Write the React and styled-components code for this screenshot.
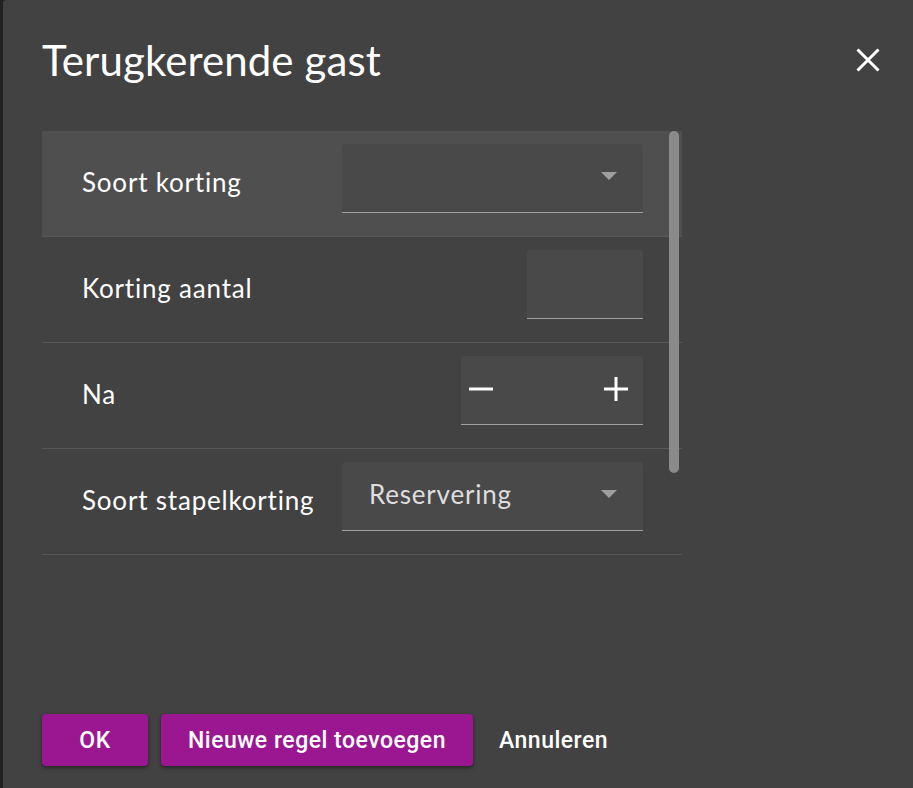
import React from "react";
import styled, { createGlobalStyle } from "styled-components";

const Global = createGlobalStyle`
  html, body { margin: 0; padding: 0; background: #212121; }
  body { font-family: Lato, "Noto Sans", sans-serif; overflow: hidden; }
  * { box-sizing: border-box; }
`;

const Page = styled.div`
  height: 788px;
  display: flex;
  padding-left: 3px;
`;

const Dialog = styled.section`
  flex: 1;
  background: #424242;
  border-top-left-radius: 4px;
  display: flex;
  flex-direction: column;
  padding-left: 39px;
  color: #fff;
`;

const Header = styled.header`
  display: flex;
  align-items: center;
  justify-content: space-between;
  padding-top: 36px;
  padding-right: 33px;
`;

const Title = styled.h1`
  margin: 0;
  font-family: Lato, sans-serif;
  font-weight: 400;
  font-size: 42px;
  line-height: 48px;
  letter-spacing: 0.1px;
  color: #fff;
`;

const CloseButton = styled.button`
  background: none;
  border: 0;
  padding: 0;
  width: 24px;
  height: 24px;
  display: flex;
  cursor: pointer;
`;

const Content = styled.div`
  position: relative;
  margin-top: 47px;
  width: 640px;
  flex: 1;
`;

const Row = styled.div`
  display: flex;
  align-items: center;
  height: 106px;
  padding: 0 39px 0 40px;
  border-bottom: 1px solid #575757;
  background: ${(p) => (p.$active ? "#4f4f4f" : "transparent")};
`;

const Label = styled.span`
  flex: 1;
  font-size: 26px;
  letter-spacing: 0.8px;
  color: #fff;
  margin-top: -4px;
`;

const Field = styled.div`
  width: ${(p) => p.$w}px;
  height: 69px;
  margin-bottom: 10px;
  background: #494949;
  border-top-left-radius: 4px;
  border-top-right-radius: 4px;
  border-bottom: 1px solid #a0a0a0;
  display: flex;
  align-items: center;
  justify-content: space-between;
  padding: 0 26px 0 27px;
`;

const Value = styled.span`
  font-size: 26px;
  letter-spacing: 0.8px;
  color: #dedede;
  margin-top: -5px;
`;

const Arrow = styled.span`
  width: 0;
  height: 0;
  margin-left: auto;
  margin-top: -4px;
  border-left: 8px solid transparent;
  border-right: 8px solid transparent;
  border-top: 8px solid #9e9e9e;
`;

const Stepper = styled(Field)`
  padding: 0 15px 0 8px;
`;

const StepBtn = styled.button`
  background: none;
  border: 0;
  padding: 0;
  width: 24px;
  height: 24px;
  display: flex;
  margin-top: -2px;
`;

const Scrollbar = styled.div`
  position: absolute;
  top: 0;
  right: 3px;
  width: 10px;
  height: 342px;
  border-radius: 5px;
  background: #8a8a8a;
`;

const Footer = styled.footer`
  display: flex;
  align-items: center;
  gap: 13px;
  padding-bottom: 22px;
`;

const Button = styled.button`
  height: 52px;
  min-width: ${(p) => (p.$min ? p.$min : 0)}px;
  padding: 0 ${(p) => (p.$text ? 13 : 27)}px;
  border: 0;
  border-radius: 4px;
  background: ${(p) => (p.$text ? "transparent" : "#9b1791")};
  box-shadow: ${(p) =>
    p.$text ? "none" : "0 2px 4px rgba(0,0,0,0.35), 0 1px 2px rgba(0,0,0,0.2)"};
  color: #fff;
  font-family: Roboto, "Noto Sans", sans-serif;
  font-weight: 500;
  font-size: 23px;
  letter-spacing: 0.5px;
  cursor: pointer;
`;

const Minus = () => (
  <svg width="24" height="24" viewBox="0 0 24 24">
    <rect x="0" y="10.5" width="24" height="3" fill="#fff" />
  </svg>
);

const Plus = () => (
  <svg width="24" height="24" viewBox="0 0 24 24">
    <rect x="0" y="10.5" width="24" height="3" fill="#fff" />
    <rect x="10.5" y="0" width="3" height="24" fill="#fff" />
  </svg>
);

export default function App() {
  return (
    <>
      <Global />
      <Page>
        <Dialog>
          <Header>
            <Title>Terugkerende gast</Title>
            <CloseButton aria-label="Sluiten">
              <svg width="24" height="24" viewBox="0 0 24 24">
                <path
                  d="M1.5 1.5 L22.5 22.5 M22.5 1.5 L1.5 22.5"
                  stroke="#fff"
                  strokeWidth="3"
                  fill="none"
                />
              </svg>
            </CloseButton>
          </Header>
          <Content>
            <Row $active>
              <Label>Soort korting</Label>
              <Field $w={301}>
                <Arrow />
              </Field>
            </Row>
            <Row>
              <Label>Korting aantal</Label>
              <Field $w={116} />
            </Row>
            <Row>
              <Label>Na</Label>
              <Stepper $w={182}>
                <StepBtn aria-label="min">
                  <Minus />
                </StepBtn>
                <StepBtn aria-label="plus">
                  <Plus />
                </StepBtn>
              </Stepper>
            </Row>
            <Row>
              <Label>Soort stapelkorting</Label>
              <Field $w={301}>
                <Value>Reservering</Value>
                <Arrow />
              </Field>
            </Row>
            <Scrollbar />
          </Content>
          <Footer>
            <Button $min={106}>OK</Button>
            <Button>Nieuwe regel toevoegen</Button>
            <Button $text>Annuleren</Button>
          </Footer>
        </Dialog>
      </Page>
    </>
  );
}
